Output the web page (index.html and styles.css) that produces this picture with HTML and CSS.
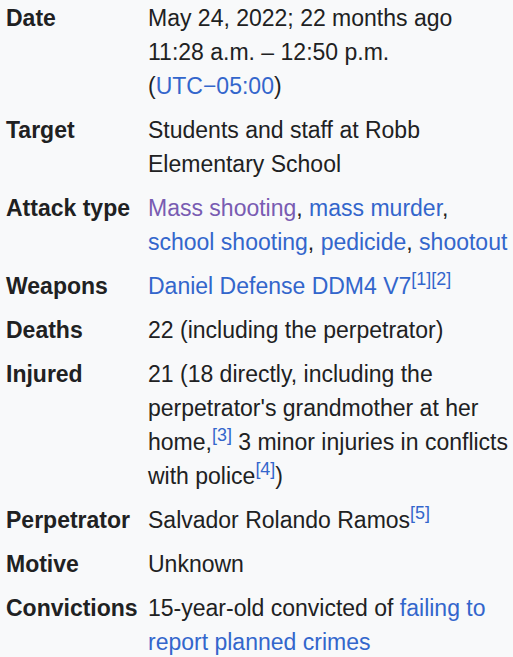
FILE: index.html
```html
<!DOCTYPE html>
<html>
<head>
<meta charset="utf-8">
<link rel="stylesheet" href="styles.css">
</head>
<body>
<div class="infobox">
  <div class="row">
    <div class="label">Date</div>
    <div class="value">May 24, 2022; 22 months ago<br>11:28 a.m. – 12:50 p.m.<br>(<a href="#">UTC−05:00</a>)</div>
  </div>
  <div class="row">
    <div class="label">Target</div>
    <div class="value">Students and staff at Robb Elementary School</div>
  </div>
  <div class="row">
    <div class="label">Attack type</div>
    <div class="value"><a class="visited" href="#">Mass shooting</a>, <a href="#">mass murder</a>, <a href="#">school shooting</a>, <a href="#">pedicide</a>, <a href="#">shootout</a></div>
  </div>
  <div class="row">
    <div class="label">Weapons</div>
    <div class="value"><a href="#">Daniel Defense DDM4 V7</a><sup><a href="#">[1]</a></sup><sup><a href="#">[2]</a></sup></div>
  </div>
  <div class="row">
    <div class="label">Deaths</div>
    <div class="value">22 (including the perpetrator)</div>
  </div>
  <div class="row">
    <div class="label">Injured</div>
    <div class="value">21 (18 directly, including the perpetrator's grandmother at her home,<sup><a href="#">[3]</a></sup> 3 minor injuries in conflicts with police<sup><a href="#">[4]</a></sup>)</div>
  </div>
  <div class="row">
    <div class="label">Perpetrator</div>
    <div class="value">Salvador Rolando Ramos<sup><a href="#">[5]</a></sup></div>
  </div>
  <div class="row">
    <div class="label">Motive</div>
    <div class="value">Unknown</div>
  </div>
  <div class="row">
    <div class="label">Convictions</div>
    <div class="value">15-year-old convicted of <a href="#">failing to report planned crimes</a></div>
  </div>
</div>
</body>
</html>
```

FILE: styles.css
```css
html, body {
  margin: 0;
  padding: 0;
  background: #f8f9fa;
}
body {
  font-family: "Liberation Sans", Arial, sans-serif;
  font-size: 23px;
  line-height: 34px;
  color: #202122;
}
.infobox {
  display: grid;
  grid-template-columns: 142px 1fr;
  padding: 1px 0 0 6px;
}
.row {
  display: contents;
}
.label {
  font-weight: bold;
  padding-bottom: 10px;
}
.value {
  padding-bottom: 10px;
}
a {
  color: #3366cc;
  text-decoration: none;
}
a.visited {
  color: #795cb2;
}
sup {
  font-size: 78%;
  line-height: 1;
  vertical-align: super;
}
```
